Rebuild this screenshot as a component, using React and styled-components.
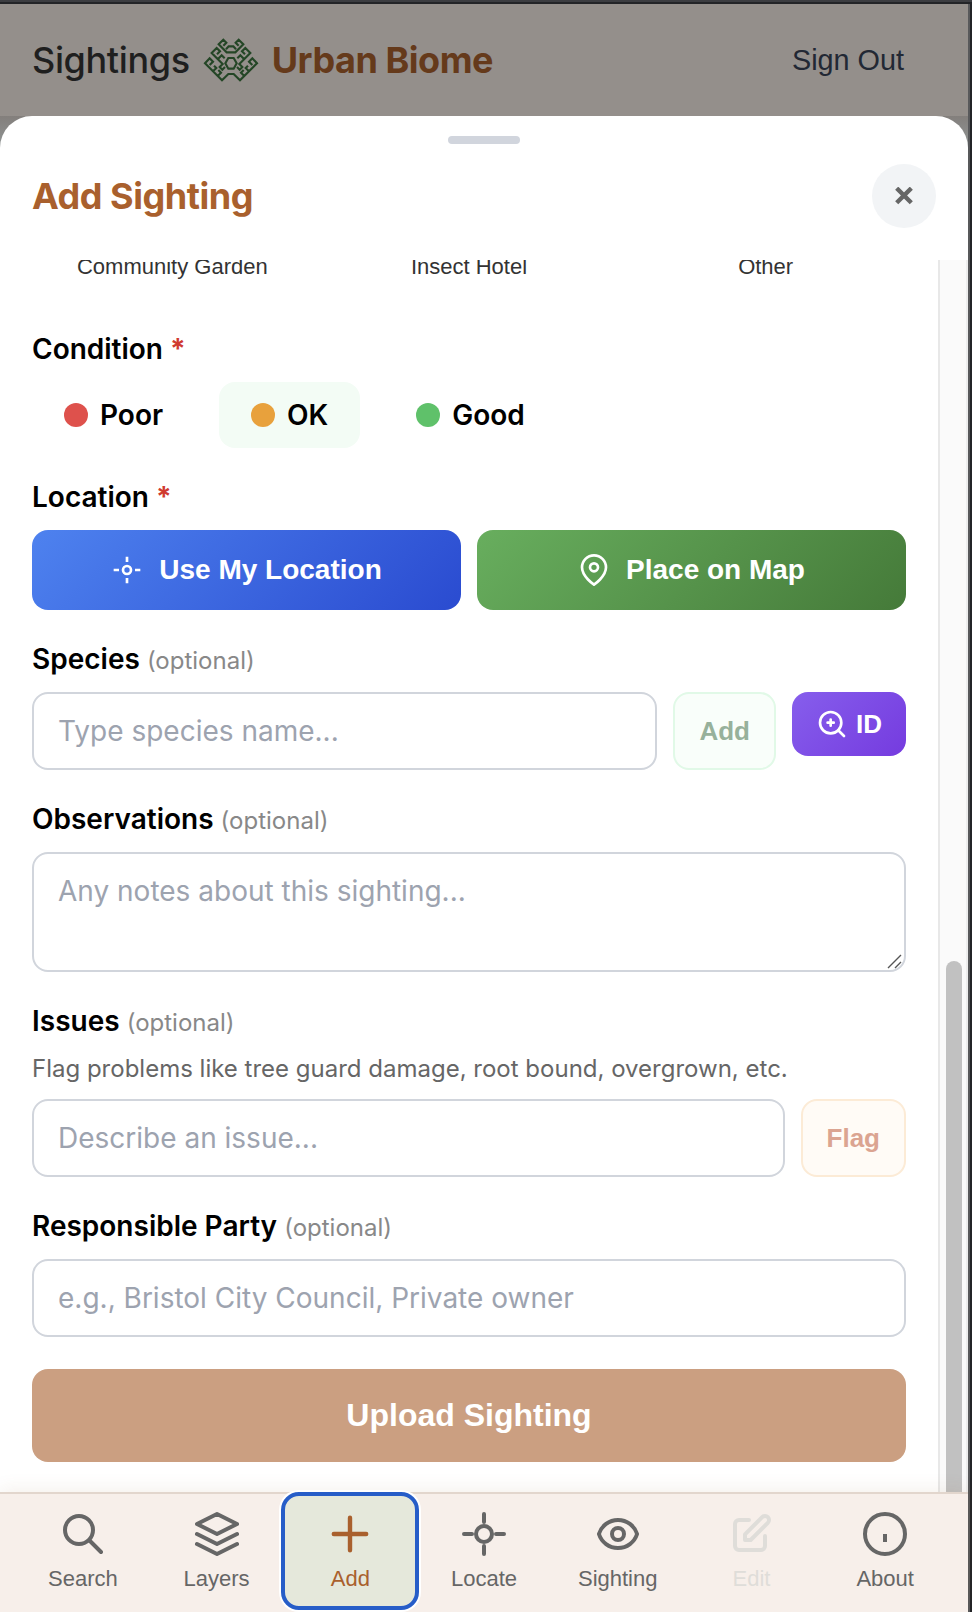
import React from "react";
import styled, { createGlobalStyle } from "styled-components";

const GlobalStyle = createGlobalStyle`
  *, *::before, *::after { box-sizing: border-box; }
  html, body { margin: 0; padding: 0; background: #26272b; }
  body { font-family: Inter, "Liberation Sans", sans-serif; -webkit-font-smoothing: antialiased; }
  button, input, textarea { font: inherit; margin: 0; }
`;

const Window = styled.div`
  width: 972px;
  height: 1612px;
  overflow: hidden;
  background: #232427;
  border-top: 2px solid #3c3d41;
  padding-top: 2px;
`;

const Frame = styled.div`
  width: 970px;
  height: 1608px;
  border-right: 2px solid #58595b;
  background: linear-gradient(#837f7c 112px, #8f9392 140px);
  display: flex;
  flex-direction: column;
`;

const Header = styled.header`
  flex: none;
  height: 112px;
  padding: 0 64px 0 32px;
  background: #948f8b;
  display: flex;
  align-items: center;
  justify-content: space-between;
`;

const Brand = styled.div`
  display: flex;
  align-items: center;
  font-size: 36px;
  line-height: 44px;
`;

const BrandSection = styled.span`
  color: #1f1f1f;
  font-weight: 500;
  letter-spacing: -0.36px;
`;

const BrandName = styled.span`
  color: #653a1b;
  font-weight: 700;
  letter-spacing: -0.46px;
`;

const Logo = styled.svg`
  width: 70px;
  height: 60px;
  margin: 0 6px 0 6px;
`;

const SignOut = styled.a`
  font-family: "Liberation Sans", Arial, sans-serif;
  font-size: 28.8px;
  color: #222834;
`;

const Sheet = styled.section`
  flex: 1;
  min-height: 0;
  background: #fff;
  border-radius: 32px 32px 0 0;
  display: flex;
  flex-direction: column;
`;

const Handle = styled.div`
  flex: none;
  width: 72px;
  height: 8px;
  border-radius: 4px;
  background: #d1d5dd;
  margin: 20px auto;
`;

const SheetHeader = styled.div`
  flex: none;
  height: 96px;
  padding: 0 32px 32px;
  display: flex;
  align-items: center;
  justify-content: space-between;
`;

const Title = styled.h2`
  margin: 0;
  font-size: 36px;
  line-height: 44px;
  font-weight: 700;
  letter-spacing: -0.46px;
  color: #a9602d;
`;

const CloseButton = styled.button`
  width: 64px;
  height: 64px;
  padding: 0;
  border: 0;
  border-radius: 50%;
  background: #f2f4f6;
  color: #666;
  display: grid;
  place-items: center;
`;

const Body = styled.div`
  flex: 1;
  min-height: 0;
  display: flex;
`;

const Form = styled.div`
  flex: 1;
  min-width: 0;
  overflow: hidden;
  padding: 0 32px;
`;

const ScrollTrack = styled.div`
  flex: none;
  width: 30px;
  background: #fafafa;
  border-left: 2px solid #e8e8e8;
  border-right: 2px solid #ededed;
  padding: 701px 5px 0 6px;
`;

const ScrollThumb = styled.div`
  height: 600px;
  border-radius: 8px;
  background: #c1c1c1;
  width: 16px;
`;

const TypeGrid = styled.div`
  display: grid;
  grid-template-columns: repeat(3, 1fr);
  gap: 16px;
  height: 72px;
  text-align: center;
  font-family: "Liberation Sans", Arial, sans-serif;
  font-size: 22px;
  line-height: 26px;
  color: #333;
`;

const TypeName = styled.span`
  margin-top: -6px;
`;

const Field = styled.div`
  margin-bottom: ${(p) => p.$space ?? 32}px;
`;

const Label = styled.div`
  height: 34px;
  margin-bottom: 16px;
  font-size: 28px;
  line-height: 34px;
  font-weight: 600;
  color: #000;
  white-space: pre;
`;

const Required = styled.span`
  color: #d03a2f;
  font-weight: 700;
`;

const Optional = styled.span`
  font-size: 24px;
  font-weight: 400;
  color: #888;
`;

const Hint = styled.div`
  margin-top: -1px;
  margin-bottom: 14px;
  font-size: 24px;
  line-height: 32px;
  color: #666;
`;

const Row = styled.div`
  display: flex;
  align-items: flex-start;
  gap: ${(p) => p.$gap ?? 16}px;
`;

const Choice = styled.button`
  height: 66px;
  padding: 0 32px;
  border: 0;
  border-radius: 16px;
  background: ${(p) => (p.$selected ? "#f3fcf5" : "transparent")};
  display: flex;
  align-items: center;
  gap: 12px;
  font-size: 28px;
  font-weight: 600;
  color: #000;
`;

const Dot = styled.span`
  width: 24px;
  height: 24px;
  border-radius: 50%;
  background: ${(p) => p.$color};
`;

const Button = styled.button`
  font-family: "Liberation Sans", Arial, sans-serif;
  font-weight: 700;
  border: 0;
  border-radius: 16px;
  color: #fff;
  display: flex;
  align-items: center;
  justify-content: center;
`;

const LocationButton = styled(Button)`
  flex: 1;
  height: 80px;
  gap: 16px;
  font-size: 28px;
  background: linear-gradient(135deg, ${(p) => p.$from}, ${(p) => p.$to});
`;

const IdButton = styled(Button)`
  flex: none;
  height: 64px;
  padding: 0 24px;
  gap: 8px;
  font-size: 26px;
  background: linear-gradient(135deg, #865eec, #753bdf);
`;

const SideButton = styled(Button)`
  flex: none;
  height: 78px;
  padding: 0 24px;
  font-size: 26px;
  border: 2px solid ${(p) => p.$line};
  background: ${(p) => p.$fill};
  color: ${(p) => p.$ink};
`;

const UploadButton = styled(Button)`
  width: 100%;
  height: 93px;
  font-size: 32px;
  background: #cb9f81;
`;

const Input = styled.input`
  display: block;
  flex: 1;
  min-width: 0;
  width: 100%;
  height: 78px;
  padding: 0 24px;
  border: 2px solid #d1d5dc;
  border-radius: 16px;
  background: #fff;
  font-size: 28px;
  outline: none;
  &::placeholder { color: #9da3af; opacity: 1; }
`;

const NotesBox = styled.div`
  height: 120px;
  border: 2px solid #d1d5dc;
  border-radius: 16px;
  padding: 20px 0 0 24px;
  display: flex;
  justify-content: space-between;
  font-size: 28px;
  line-height: 34px;
  color: #9da3af;
`;

const Grip = styled.svg`
  align-self: flex-end;
  width: 20px;
  height: 20px;
`;

const Nav = styled.nav`
  flex: none;
  position: relative;
  height: 120px;
  border-top: 2px solid #e2d6cd;
  background: #f7efea;
  padding: 0 16px 4px;
  display: flex;
  box-shadow: 0 -4px 16px rgba(139, 90, 43, 0.08);
`;

const NavItem = styled.button`
  flex: 1;
  height: 114px;
  padding: 0;
  border: 0;
  border-radius: 16px;
  background: ${(p) => (p.$active ? "#e5e8db" : "transparent")};
  outline: ${(p) => (p.$active ? "4px solid #265dc8" : "none")};
  outline-offset: -2px;
  box-shadow: ${(p) => (p.$active ? "0 0 0 4px #fff" : "none")};
  color: ${(p) => (p.$disabled ? "#dfddd9" : p.$active ? "#a9602d" : "#666")};
  display: flex;
  flex-direction: column;
  align-items: center;
  padding-top: 16px;
  gap: 8px;
  font-family: "Liberation Sans", Arial, sans-serif;
  font-size: 22px;
  line-height: 25px;
`;

const IconSvg = styled.svg`
  flex: none;
  width: ${(p) => p.$size}px;
  height: ${(p) => p.$size}px;
  fill: none;
  stroke: currentColor;
  stroke-width: 2;
  stroke-linecap: ${(p) => p.$cap ?? "round"};
  stroke-linejoin: round;
`;

function Icon({ size = 48, cap, children }) {
  return (
    <IconSvg viewBox="0 0 24 24" $size={size} $cap={cap}>
      {children}
    </IconSvg>
  );
}

const logoHalf =
  "M82 47 L91 38 L82 29 L68 43 L92 67 H105 M105 49 H98 L90 58 " +
  "M63 73 L72 64 L62 54 L47 69 L80 102 L71 111 L79 119 L87 111 " +
  "M66 87 L77 76 L86 85 " +
  "M105 84 H97 L88 100 L97 116 H105 " +
  "M41 105 L51 95 L41 85 L27 100 L78 151 L97 132 H105 " +
  "M51 124 L61 114 L54 107 M65 138 L75 128 L67 120";

function BiomeLogo() {
  return (
    <Logo viewBox="0 0 210 180" fill="none" stroke="#244626" strokeWidth="6.4">
      <path d={logoHalf} />
      <path d={logoHalf} transform="translate(210 0) scale(-1 1)" />
    </Logo>
  );
}

const navItems = [
  {
    name: "Search",
    icon: <path d="M21 21l-6-6m2-5a7 7 0 11-14 0 7 7 0 0114 0z" />,
  },
  {
    name: "Layers",
    icon: <path d="M12 2L2 7l10 5 10-5-10-5zM2 17l10 5 10-5M2 12l10 5 10-5" />,
  },
  { name: "Add", active: true, icon: <path d="M12 3.9v16.2M3.9 12h16.2" strokeWidth="2.2" /> },
  {
    name: "Locate",
    icon: (
      <>
        <circle cx="12" cy="12" r="4" />
        <path d="M12 2v4M12 18v4M2 12h4M18 12h4" />
      </>
    ),
  },
  {
    name: "Sighting",
    icon: (
      <>
        <circle cx="12" cy="12" r="3" />
        <path d="M2.458 12C3.732 7.943 7.523 5 12 5c4.478 0 8.268 2.943 9.542 7-1.274 4.057-5.064 7-9.542 7-4.477 0-8.268-2.943-9.542-7z" />
      </>
    ),
  },
  {
    name: "Edit",
    disabled: true,
    icon: (
      <path d="M11 5H6a2 2 0 00-2 2v11a2 2 0 002 2h11a2 2 0 002-2v-5m-1.414-9.414a2 2 0 112.828 2.828L11.828 15H9v-2.828l8.586-8.586z" />
    ),
  },
  {
    name: "About",
    cap: "butt",
    icon: (
      <>
        <circle cx="12" cy="12" r="10" />
        <path d="M12 12v4" />
      </>
    ),
  },
];

export default function App() {
  return (
    <Window>
      <GlobalStyle />
      <Frame>
        <Header>
          <Brand>
            <BrandSection>Sightings</BrandSection>
            <BiomeLogo />
            <BrandName>Urban Biome</BrandName>
          </Brand>
          <SignOut>Sign Out</SignOut>
        </Header>
        <Sheet>
          <Handle />
          <SheetHeader>
            <Title>Add Sighting</Title>
            <CloseButton aria-label="Close">
              <svg width="18" height="18" viewBox="0 0 18 18" stroke="currentColor" strokeWidth="4.4">
                <path d="M1.7 1.2l14.6 14.6M16.3 1.2L1.7 15.8" />
              </svg>
            </CloseButton>
          </SheetHeader>
          <Body>
            <Form>
              <TypeGrid>
                <TypeName>Community Garden</TypeName>
                <TypeName>Insect Hotel</TypeName>
                <TypeName>Other</TypeName>
              </TypeGrid>
              <Field>
                <Label>
                  Condition <Required>*</Required>
                </Label>
                <Row $gap={24}>
                  <Choice><Dot $color="#de514c" />Poor</Choice>
                  <Choice $selected><Dot $color="#e8a13c" />OK</Choice>
                  <Choice><Dot $color="#5fc16a" />Good</Choice>
                </Row>
              </Field>
              <Field>
                <Label>
                  Location <Required>*</Required>
                </Label>
                <Row>
                  <LocationButton $from="#4e82ef" $to="#2a4bd0">
                    <Icon size={32} cap="butt">
                      <circle cx="12" cy="12" r="3" />
                      <path d="M12 2v4M12 18v4M2 12h4M18 12h4" />
                    </Icon>
                    Use My Location
                  </LocationButton>
                  <LocationButton $from="#68ae5e" $to="#457a39">
                    <Icon size={32}>
                      <path d="M21 10c0 7-9 13-9 13s-9-6-9-13a9 9 0 0118 0z" />
                      <circle cx="12" cy="10" r="3" />
                    </Icon>
                    Place on Map
                  </LocationButton>
                </Row>
              </Field>
              <Field>
                <Label>
                  Species <Optional>(optional)</Optional>
                </Label>
                <Row>
                  <Input placeholder="Type species name..." />
                  <SideButton $line="#e1f9e7" $fill="#f9fefa" $ink="#97b19b">Add</SideButton>
                  <IdButton>
                    <Icon size={32}>
                      <circle cx="11" cy="11" r="8" />
                      <path d="M21 21l-4.35-4.35M11 8.7v4.6M8.7 11h4.6" />
                    </Icon>
                    ID
                  </IdButton>
                </Row>
              </Field>
              <Field>
                <Label>
                  Observations <Optional>(optional)</Optional>
                </Label>
                <NotesBox>
                  Any notes about this sighting...
                  <Grip viewBox="0 0 20 20" stroke="#555" strokeWidth="1.4">
                    <path d="M4 18L17 5M11 18L17 12" />
                  </Grip>
                </NotesBox>
              </Field>
              <Field>
                <Label>
                  Issues <Optional>(optional)</Optional>
                </Label>
                <Hint>Flag problems like tree guard damage, root bound, overgrown, etc.</Hint>
                <Row>
                  <Input placeholder="Describe an issue..." />
                  <SideButton $line="#fcebd6" $fill="#fffbf6" $ink="#dba491">Flag</SideButton>
                </Row>
              </Field>
              <Field>
                <Label>
                  Responsible Party <Optional>(optional)</Optional>
                </Label>
                <Input placeholder="e.g., Bristol City Council, Private owner" />
              </Field>
              <UploadButton>Upload Sighting</UploadButton>
            </Form>
            <ScrollTrack>
              <ScrollThumb />
            </ScrollTrack>
          </Body>
        </Sheet>
        <Nav>
          {navItems.map((item) => (
            <NavItem key={item.name} $active={item.active} $disabled={item.disabled}>
              <Icon cap={item.cap}>{item.icon}</Icon>
              {item.name}
            </NavItem>
          ))}
        </Nav>
      </Frame>
    </Window>
  );
}
